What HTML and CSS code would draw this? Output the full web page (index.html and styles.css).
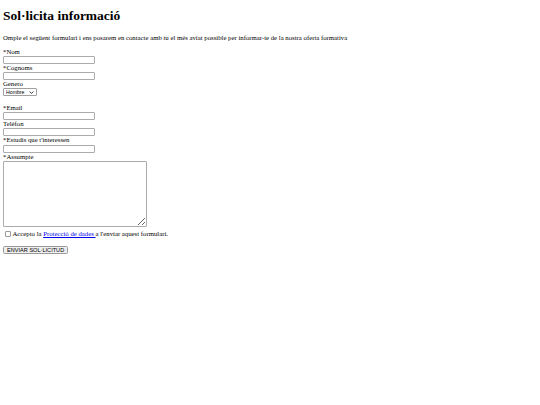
FILE: index.html
```html
<!DOCTYPE html>
<html lang="ca">
<head>
<meta charset="utf-8">
<title>Sol·licita informació</title>
<link rel="stylesheet" href="styles.css">
</head>
<body>
<h1 class="title">Sol·licita informació</h1>
<p class="intro">Omple el següent formulari i ens posarem en contacte amb tu el més aviat possible per informar-te de la nostra oferta formativa</p>
<form class="form">
  <label class="label" for="nom">*Nom</label>
  <input class="field" id="nom" type="text">
  <label class="label" for="cognoms">*Cognoms</label>
  <input class="field" id="cognoms" type="text">
  <label class="label" for="genere">Genero</label>
  <span class="select-wrap">
    <select class="select" id="genere"><option>Hombre</option><option>Mujer</option></select>
    <svg class="chevron" width="5" height="3" viewBox="0 0 5 3" aria-hidden="true"><path d="M0.6 0.5 L2.5 2.4 L4.4 0.5" fill="none" stroke="#222" stroke-width="0.9"/></svg>
  </span>
  <div class="spacer"></div>
  <label class="label" for="email">*Email</label>
  <input class="field" id="email" type="text">
  <label class="label" for="tel">Telèfon</label>
  <input class="field" id="tel" type="text">
  <label class="label" for="estudis">*Estudis que t'interessen</label>
  <input class="field field-shift" id="estudis" type="text">
  <label class="label" for="assumpte">*Assumpte</label>
  <textarea class="area" id="assumpte"></textarea>
  <div class="accept">
    <input class="check" type="checkbox" id="accept">
    <label for="accept">Accepto la <a class="link" href="#">Protecció de dades </a> a l'enviar aquest formulari.</label>
  </div>
  <button class="submit" type="button">ENVIAR SOL·LICITUD</button>
</form>
</body>
</html>
```
FILE: styles.css
```css
html, body {
  background: #ffffff;
}
body {
  margin: 0;
  padding: 0 3px;
  font-family: "Liberation Serif", "Times New Roman", serif;
  font-size: 6.75px;
  line-height: 8px;
  color: #000;
}
.title {
  font-size: 13.5px;
  line-height: 16px;
  font-weight: bold;
  margin: 8px 0 0;
}
.intro {
  margin: 9.5px 0 0;
}
.form {
  margin-top: 6.5px;
  display: flex;
  flex-direction: column;
  align-items: flex-start;
}
.label {
  display: block;
  height: 8px;
}
.field {
  display: block;
  box-sizing: border-box;
  width: 92px;
  height: 8px;
  margin: 0;
  padding: 0 1px;
  border: 1px solid #ababab;
  border-radius: 1px;
  font-size: 5.6px;
  background: #fff;
}
.field-shift {
  margin-top: 1px;
}
.select-wrap {
  position: relative;
  display: block;
  width: 34px;
  height: 8px;
}
.select {
  appearance: none;
  -webkit-appearance: none;
  display: block;
  box-sizing: border-box;
  width: 34px;
  height: 8px;
  margin: 0;
  padding: 0 0 0 2px;
  border: 1px solid #a0a0a0;
  border-radius: 1px;
  font-family: "Liberation Sans", Arial, sans-serif;
  font-size: 5.2px;
  line-height: 6px;
  color: #000;
  background: #fff;
}
.chevron {
  position: absolute;
  right: 3px;
  top: 2.5px;
  pointer-events: none;
}
.spacer {
  height: 8px;
}
.area {
  display: block;
  box-sizing: border-box;
  width: 144px;
  height: 66px;
  margin: 0;
  padding: 1px;
  border: 1px solid #ababab;
  border-radius: 1px;
  font-size: 5.6px;
  resize: both;
}
.accept {
  display: flex;
  align-items: center;
  margin-top: 2.5px;
  height: 8px;
}
.check {
  appearance: none;
  -webkit-appearance: none;
  box-sizing: border-box;
  width: 6px;
  height: 6px;
  margin: 0 1.5px 0 2px;
  border: 1px solid #9a9a9a;
  border-radius: 1px;
  background: #fff;
}
.link {
  color: #0000ee;
  text-decoration: underline;
}
.submit {
  margin-top: 8px;
  box-sizing: border-box;
  height: 8px;
  padding: 0 3px;
  border: 1px solid #9a9a9a;
  border-radius: 1.5px;
  background: #efefef;
  font-family: "Liberation Sans", Arial, sans-serif;
  font-size: 5.6px;
  line-height: 6px;
  color: #000;
}
```
